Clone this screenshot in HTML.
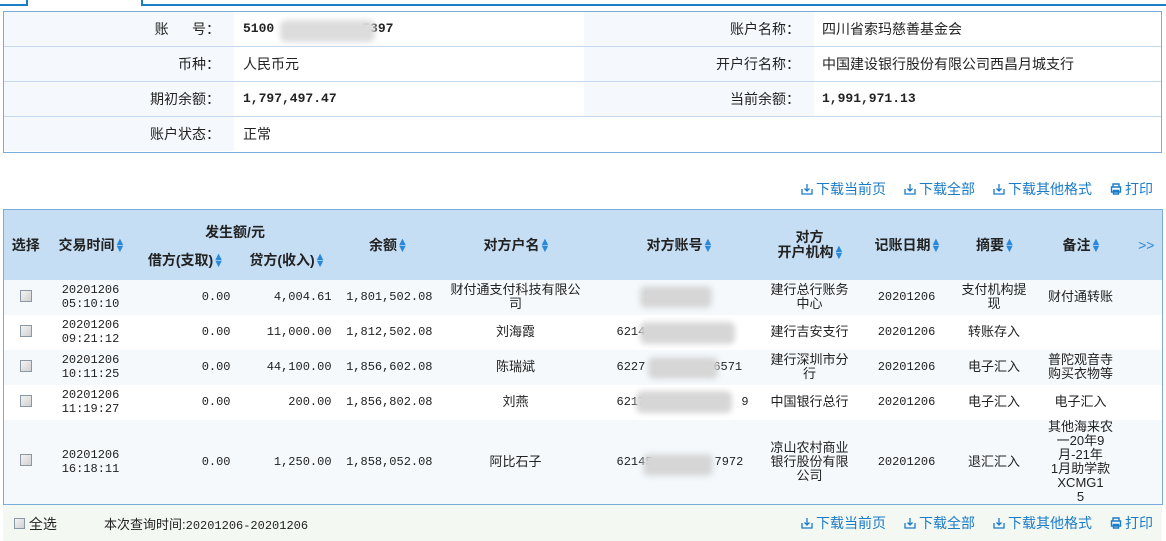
<!DOCTYPE html>
<html><head><meta charset="utf-8"><style>
*{margin:0;padding:0;box-sizing:border-box}
body{width:1166px;height:541px;overflow:hidden;background:#fff;font-family:"Liberation Sans","Noto Sans CJK SC",sans-serif;font-size:13px;color:#222;position:relative}
.abs{position:absolute}
.info{position:absolute;left:3px;top:11px;width:1159px;height:142px;border:1px solid #79acd9;font-size:14px}
.info .row{position:absolute;left:0;width:1157px;height:35px;border-bottom:1px solid #c4d9ee}
.lab{position:absolute;top:0;height:34px;background:#f5f9fd;text-align:right;line-height:34px;padding-right:14px}
.val{position:absolute;top:0;height:34px;line-height:34px}
.mono{font-family:"Liberation Mono",monospace;font-weight:bold;font-size:13px}
table{position:absolute;left:3px;top:209px;width:1159px;border-collapse:collapse;border:1px solid #79acd9;table-layout:fixed}
th{background:#c6def3;font-weight:bold;font-size:14px;color:#222}
td{text-align:center;font-size:13px;line-height:14px;white-space:nowrap}
.n{font-family:"Liberation Mono",monospace;font-size:12px;text-align:right;padding-right:5px}
.c{font-family:"Liberation Mono",monospace;font-size:12px}
tr.a td{background:#f5f9fc}
.cb{display:inline-block;width:12px;height:12px;border:1px solid #8a97a5;background:linear-gradient(135deg,#f4f4f4,#d0d0d0)}
.s{color:#2a88d8;font-size:11px;vertical-align:middle;display:inline-block;line-height:7px;width:8px}
.tb{position:absolute;right:13px;font-size:14px;color:#1a7bc9;white-space:nowrap}
.tb span{margin-left:18px}
.tb svg{vertical-align:-1px;margin-right:3px}
.blur{position:absolute;background:#d6d6d6;filter:blur(3px);border-radius:6px}
</style></head><body>
<div class="abs" style="left:0;top:4px;width:28px;height:2px;background:#1b7fc6"></div>
<div class="abs" style="left:26px;top:0;width:2px;height:6px;background:#1b7fc6"></div>
<div class="abs" style="left:141px;top:0;width:2px;height:6px;background:#1b7fc6"></div>
<div class="abs" style="left:141px;top:4px;width:1025px;height:2px;background:#1b7fc6"></div>

<div class="info">
<div class="row" style="top:0"><div class="lab" style="left:0;width:230px">账&nbsp;&nbsp;&nbsp;&nbsp;&nbsp;&nbsp;号：</div><div class="val mono" style="left:239px">5100<span style="display:inline-block;width:88px"></span>5397</div><div class="lab" style="left:580px;width:230px">账户名称：</div><div class="val" style="left:818px">四川省索玛慈善基金会</div></div>
<div class="row" style="top:35px"><div class="lab" style="left:0;width:230px">币种：</div><div class="val" style="left:239px">人民币元</div><div class="lab" style="left:580px;width:230px">开户行名称：</div><div class="val" style="left:818px">中国建设银行股份有限公司西昌月城支行</div></div>
<div class="row" style="top:70px"><div class="lab" style="left:0;width:230px">期初余额：</div><div class="val mono" style="left:239px">1,797,497.47</div><div class="lab" style="left:580px;width:230px">当前余额：</div><div class="val mono" style="left:818px">1,991,971.13</div></div>
<div class="row" style="top:105px;border:none"><div class="lab" style="left:0;width:230px">账户状态：</div><div class="val" style="left:239px">正常</div></div>
</div>
<div class="blur" style="left:280px;top:20px;width:95px;height:22px;background:#dcdcdc"></div>

<div class="tb" style="top:179px"><span><svg width="12" height="12" viewBox="0 0 12 12" fill="none" stroke="#1a7bc9" stroke-width="1.3"><path d="M1 6v5h10V6M6 1v7M3.5 5.5L6 8l2.5-2.5"/></svg>下载当前页</span><span><svg width="12" height="12" viewBox="0 0 12 12" fill="none" stroke="#1a7bc9" stroke-width="1.3"><path d="M1 6v5h10V6M6 1v7M3.5 5.5L6 8l2.5-2.5"/></svg>下载全部</span><span><svg width="12" height="12" viewBox="0 0 12 12" fill="none" stroke="#1a7bc9" stroke-width="1.3"><path d="M1 6v5h10V6M6 1v7M3.5 5.5L6 8l2.5-2.5"/></svg>下载其他格式</span><span><svg width="12" height="12" viewBox="0 0 12 12" fill="none" stroke="#1a7bc9" stroke-width="1.4"><path d="M3 4V1h6v3M1.5 4h9v5h-9zM3.5 7.5h5V11h-5z"/></svg>打印</span></div>

<table>
<colgroup><col style="width:44px"><col style="width:86px"><col style="width:102px"><col style="width:101px"><col style="width:101px"><col style="width:156px"><col style="width:170px"><col style="width:92px"><col style="width:102px"><col style="width:73px"><col style="width:100px"><col style="width:32px"></colgroup>
<tr style="height:36px"><th rowspan="2">选择</th><th rowspan="2">交易时间<i class="s">▲<br>▼</i></th><th colspan="2" style="padding-top:8px">发生额/元</th><th rowspan="2">余额<i class="s">▲<br>▼</i></th><th rowspan="2">对方户名<i class="s">▲<br>▼</i></th><th rowspan="2">对方账号<i class="s">▲<br>▼</i></th><th rowspan="2" style="line-height:15px">对方<br>开户机构<i class="s">▲<br>▼</i></th><th rowspan="2">记账日期<i class="s">▲<br>▼</i></th><th rowspan="2">摘要<i class="s">▲<br>▼</i></th><th rowspan="2">备注<i class="s">▲<br>▼</i></th><th rowspan="2" style="color:#2a88d8;font-weight:normal">&gt;&gt;</th></tr>
<tr style="height:34px"><th style="padding-bottom:6px">借方(支取)<i class="s">▲<br>▼</i></th><th style="padding-bottom:6px">贷方(收入)<i class="s">▲<br>▼</i></th></tr>
<tr class="a" style="height:35px"><td><i class="cb"></i></td><td class="c">20201206<br>05:10:10</td><td class="n">0.00</td><td class="n">4,004.61</td><td class="n">1,801,502.08</td><td>财付通支付科技有限公<br>司</td><td class="c" style="text-align:left;padding-left:50px">2</td><td>建行总行账务<br>中心</td><td class="c">20201206</td><td>支付机构提<br>现</td><td>财付通转账</td><td></td></tr>
<tr style="height:35px"><td><i class="cb"></i></td><td class="c">20201206<br>09:21:12</td><td class="n">0.00</td><td class="n">11,000.00</td><td class="n">1,812,502.08</td><td>刘海霞</td><td class="c" style="text-align:left;padding-left:23px">6214</td><td>建行吉安支行</td><td class="c">20201206</td><td>转账存入</td><td></td><td></td></tr>
<tr class="a" style="height:35px"><td><i class="cb"></i></td><td class="c">20201206<br>10:11:25</td><td class="n">0.00</td><td class="n">44,100.00</td><td class="n">1,856,602.08</td><td>陈瑞斌</td><td class="c" style="text-align:left;padding-left:23px">6227<span style="display:inline-block;width:68px"></span>6571</td><td>建行深圳市分<br>行</td><td class="c">20201206</td><td>电子汇入</td><td>普陀观音寺<br>购买衣物等</td><td></td></tr>
<tr style="height:35px"><td><i class="cb"></i></td><td class="c">20201206<br>11:19:27</td><td class="n">0.00</td><td class="n">200.00</td><td class="n">1,856,802.08</td><td>刘燕</td><td class="c" style="text-align:left;padding-left:23px">6217<span style="display:inline-block;width:96px"></span>9</td><td>中国银行总行</td><td class="c">20201206</td><td>电子汇入</td><td>电子汇入</td><td></td></tr>
<tr class="a" style="height:84px"><td><i class="cb"></i></td><td class="c">20201206<br>16:18:11</td><td class="n">0.00</td><td class="n">1,250.00</td><td class="n">1,858,052.08</td><td>阿比石子</td><td class="c" style="text-align:left;padding-left:23px">62145<span style="display:inline-block;width:62px"></span>7972</td><td>凉山农村商业<br>银行股份有限<br>公司</td><td class="c">20201206</td><td>退汇汇入</td><td>其他海来农<br>一20年9<br>月-21年<br>1月助学款<br>XCMG1<br>5</td><td></td></tr>
</table>
<div class="blur" style="left:640px;top:286px;width:72px;height:22px"></div>
<div class="blur" style="left:640px;top:322px;width:95px;height:22px"></div>
<div class="blur" style="left:648px;top:357px;width:70px;height:22px"></div>
<div class="blur" style="left:636px;top:391px;width:96px;height:22px"></div>
<div class="blur" style="left:643px;top:454px;width:70px;height:22px"></div>

<div class="abs" style="left:3px;top:505px;width:1159px;height:36px;background:#f4f8f2"></div>
<div class="abs" style="left:14px;top:514px;font-size:14px"><i class="cb" style="width:11px;height:11px"></i> 全选</div>
<div class="abs" style="left:104px;top:514px;font-size:13px">本次查询时间:<span class="c">20201206-20201206</span></div>
<div class="tb" style="top:513px"><span><svg width="12" height="12" viewBox="0 0 12 12" fill="none" stroke="#1a7bc9" stroke-width="1.3"><path d="M1 6v5h10V6M6 1v7M3.5 5.5L6 8l2.5-2.5"/></svg>下载当前页</span><span><svg width="12" height="12" viewBox="0 0 12 12" fill="none" stroke="#1a7bc9" stroke-width="1.3"><path d="M1 6v5h10V6M6 1v7M3.5 5.5L6 8l2.5-2.5"/></svg>下载全部</span><span><svg width="12" height="12" viewBox="0 0 12 12" fill="none" stroke="#1a7bc9" stroke-width="1.3"><path d="M1 6v5h10V6M6 1v7M3.5 5.5L6 8l2.5-2.5"/></svg>下载其他格式</span><span><svg width="12" height="12" viewBox="0 0 12 12" fill="none" stroke="#1a7bc9" stroke-width="1.4"><path d="M3 4V1h6v3M1.5 4h9v5h-9zM3.5 7.5h5V11h-5z"/></svg>打印</span></div>
</body></html>
